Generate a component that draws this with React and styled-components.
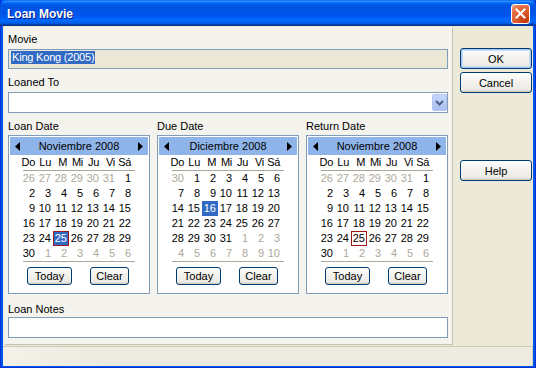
import React from 'react';
import styled, { createGlobalStyle } from 'styled-components';

const GlobalStyle = createGlobalStyle`
  html, body { margin: 0; padding: 0; background: #0055EA; }
  body { font-family: "Liberation Sans", Arial, sans-serif; font-size: 11px; color: #000; overflow: hidden; }
  * { box-sizing: border-box; }
`;

const Window = styled.div`
  width: 536px;
  height: 368px;
  display: flex;
  flex-direction: column;
  background: #0055EA;
  box-shadow: inset 1px 0 0 #0831D9, inset -1px 0 0 #0831D9, inset 0 -1px 0 #0831D9;
`;

const TitleBar = styled.div`
  height: 26px;
  flex: none;
  display: flex;
  align-items: center;
  justify-content: space-between;
  padding: 0 6px 0 7px;
  border-radius: 7px 7px 0 0;
  background: linear-gradient(180deg, #0058EE 0%, #3593FF 4%, #288EFF 6%, #127DFF 8%, #036FFC 10%, #0262EE 14%, #0057E5 20%, #0054E3 24%, #0055EB 56%, #005BF5 66%, #026AFE 76%, #0062EF 86%, #0052D6 92%, #0040AB 94%, #003092 100%);
`;

const Title = styled.div`
  color: #fff;
  font-weight: bold;
  font-size: 12px;
  line-height: 14px;
  margin-top: 1px;
  text-shadow: 1px 1px 0 #0A1883;
`;

const CloseButton = styled.div`
  width: 19px;
  height: 20px;
  margin-top: 1px;
  border: 1px solid #fff;
  border-radius: 3px;
  background: radial-gradient(circle at 80% 85%, #C23B0A 0%, #DB5E2E 50%, #E7744A 75%, #F3A889 100%);
  display: flex;
  align-items: center;
  justify-content: center;
`;

const Body = styled.div`
  flex: 1;
  margin: 0 3px 2px 3px;
  background: #ECE9D8;
  display: flex;
  flex-direction: column;
`;

const MainRow = styled.div`
  display: flex;
  padding: 1px 0 0 1px;
`;

const Panel = styled.div`
  width: 448px;
  background: #F4F3EE;
  padding: 6px 4px 6px 4px;
  display: flex;
  flex-direction: column;
  box-shadow: 1px 1px 0 #C6C2B1;
`;

const Label = styled.div`
  height: 13px;
  line-height: 13px;
  margin-top: ${p => p.$mt || 0}px;
  margin-bottom: ${p => (p.$mb == null ? 3 : p.$mb)}px;
  white-space: nowrap;
`;

const Field = styled.div`
  height: ${p => p.$h || 21}px;
  border: 1px solid #7F9DB9;
  background: ${p => (p.$readonly ? '#EBE8D7' : '#FFFFFF')};
  display: flex;
  align-items: flex-start;
  justify-content: ${p => (p.$combo ? 'flex-end' : 'flex-start')};
  padding: 1px ${p => (p.$combo ? 0 : 2)}px 1px 2px;
`;

const Selected = styled.span`
  background: #316AC5;
  color: #fff;
  line-height: 13px;
  height: 13px;
  padding: 0 1px;
  letter-spacing: -0.2px;
  white-space: nowrap;
`;

const ComboButton = styled.div`
  width: 15px;
  height: 17px;
  border-radius: 2px;
  background: linear-gradient(180deg, #C6D7FC 0%, #B5C9F6 60%, #A9C0F3 100%);
  border: 1px solid #B3C6EF;
  display: flex;
  align-items: center;
  justify-content: center;
`;

const CalendarRow = styled.div`
  display: grid;
  grid-template-columns: repeat(3, 142px);
  column-gap: 7px;
  margin-top: 7px;
`;

const CalendarColumn = styled.div`
  display: flex;
  flex-direction: column;
`;

const CalBox = styled.div`
  height: 159px;
  border: 1px solid #7F9DB9;
  background: #FFFFFF;
  padding: 1px;
  display: flex;
  flex-direction: column;
`;

const CalHeader = styled.div`
  height: 18px;
  background: #8FB4E9;
  display: flex;
  align-items: center;
  justify-content: space-between;
  padding: 0 5px;
  line-height: 13px;
`;

const DowRow = styled.div`
  display: grid;
  grid-template-columns: repeat(7, 16px);
  margin-left: 11px;
  height: 15px;
  line-height: 15px;
`;

const Dow = styled.div`
  text-align: right;
  padding-right: 2px;
  white-space: nowrap;
  letter-spacing: -0.3px;
`;

const Rule = styled.div`
  height: 1px;
  width: 112px;
  margin-left: 13px;
  background: #ACA899;
  flex: none;
`;

const DayGrid = styled.div`
  display: grid;
  grid-template-columns: repeat(7, 16px);
  grid-auto-rows: 15px;
  margin-left: 11px;
  height: 90px;
`;

const Day = styled.div`
  border: 1px solid ${p => (p.$today ? '#9C1A1A' : 'transparent')};
  background: ${p => (p.$selected ? '#316AC5' : 'transparent')};
  color: ${p => (p.$selected ? '#FFFFFF' : p.$muted ? '#ACA899' : '#000000')};
  text-align: right;
  padding-right: 1px;
  line-height: 13px;
`;

const CalButtons = styled.div`
  display: flex;
  gap: 18px;
  padding-left: 17px;
  margin-top: 5px;
`;

const XPButton = styled.button`
  width: ${p => p.$w}px;
  height: ${p => p.$h || 18}px;
  padding: 0;
  font-family: "Liberation Sans", Arial, sans-serif;
  font-size: 11px;
  color: #000;
  border: 1px solid #003C74;
  border-radius: 3px;
  background: linear-gradient(180deg, #FFFFFF 0%, #F4F3EE 40%, #ECEBE6 85%, #D6D0C5 100%);
  box-shadow: ${p =>
    p.$default
      ? 'inset 0 0 0 1px #A9C6F0, inset 0 0 0 2px #C9DCF8'
      : 'inset 0 -1px 0 #D6D0C5'};
  display: flex;
  align-items: center;
  justify-content: center;
  flex: none;
`;

const ButtonColumn = styled.div`
  display: flex;
  flex-direction: column;
  padding: 21px 0 0 8px;
  gap: 3px;
`;

const Spacer = styled.div`
  height: ${p => p.$h}px;
`;

const StatusBar = styled.div`
  margin-top: 2px;
  height: 20px;
  border-top: 1px solid #CFCBBA;
  background: linear-gradient(90deg, #F3F1E8 0%, #EDEBDF 20%, #EEECE0 100%);
  box-shadow: inset -1px 0 0 #D8D4C4;
`;

const buildMonth = (prevStart, prevEnd, days, nextCount) => {
  const cells = [];
  for (let d = prevStart; d <= prevEnd; d++) cells.push({ d, muted: true });
  for (let d = 1; d <= days; d++) cells.push({ d, muted: false });
  for (let d = 1; d <= nextCount; d++) cells.push({ d, muted: true });
  return cells;
};

const DOW = ['Do', 'Lu', 'M', 'Mi', 'Ju', 'Vi', 'Sá'];

const LeftArrow = () => (
  <svg width="5" height="9" viewBox="0 0 5 9"><polygon points="5,0 0,4.5 5,9" fill="#000" /></svg>
);
const RightArrow = () => (
  <svg width="5" height="9" viewBox="0 0 5 9"><polygon points="0,0 5,4.5 0,9" fill="#000" /></svg>
);

const Calendar = ({ title, month, cells, selected, today }) => (
  <CalendarColumn>
    <Label $mb={2}>{title}</Label>
    <CalBox>
      <CalHeader>
        <LeftArrow />
        <span>{month}</span>
        <RightArrow />
      </CalHeader>
      <DowRow>
        {DOW.map(d => (
          <Dow key={d}>{d}</Dow>
        ))}
      </DowRow>
      <Rule />
      <DayGrid>
        {cells.map((c, i) => (
          <Day
            key={i}
            $muted={c.muted}
            $selected={!c.muted && c.d === selected}
            $today={!c.muted && c.d === today}
          >
            {c.d}
          </Day>
        ))}
      </DayGrid>
      <Rule />
      <CalButtons>
        <XPButton $w={45}>Today</XPButton>
        <XPButton $w={39}>Clear</XPButton>
      </CalButtons>
    </CalBox>
  </CalendarColumn>
);

export default function App() {
  const nov = buildMonth(26, 31, 30, 6);
  const dec = buildMonth(30, 30, 31, 10);
  return (
    <>
      <GlobalStyle />
      <Window>
        <TitleBar>
          <Title>Loan Movie</Title>
          <CloseButton>
            <svg width="11" height="11" viewBox="0 0 11 11">
              <path d="M1.5 1.5 L9.5 9.5 M9.5 1.5 L1.5 9.5" stroke="#fff" strokeWidth="2" strokeLinecap="square" />
            </svg>
          </CloseButton>
        </TitleBar>
        <Body>
          <MainRow>
            <Panel>
              <Label>Movie</Label>
              <Field $h={20} $readonly>
                <Selected>King Kong (2005)</Selected>
              </Field>
              <Label $mt={7}>Loaned To</Label>
              <Field $combo>
                <ComboButton>
                  <svg width="9" height="6" viewBox="0 0 9 6">
                    <path d="M1 1 L4.5 4.5 L8 1" stroke="#4D6185" strokeWidth="2" fill="none" />
                  </svg>
                </ComboButton>
              </Field>
              <CalendarRow>
                <Calendar title="Loan Date" month="Noviembre 2008" cells={nov} selected={25} today={25} />
                <Calendar title="Due Date" month="Diciembre 2008" cells={dec} selected={16} />
                <Calendar title="Return Date" month="Noviembre 2008" cells={nov} today={25} />
              </CalendarRow>
              <Label $mt={9} $mb={1}>Loan Notes</Label>
              <Field />
            </Panel>
            <ButtonColumn>
              <XPButton $w={72} $h={21} $default>OK</XPButton>
              <XPButton $w={72} $h={21}>Cancel</XPButton>
              <Spacer $h={61} />
              <XPButton $w={72} $h={21}>Help</XPButton>
            </ButtonColumn>
          </MainRow>
          <StatusBar />
        </Body>
      </Window>
    </>
  );
}
